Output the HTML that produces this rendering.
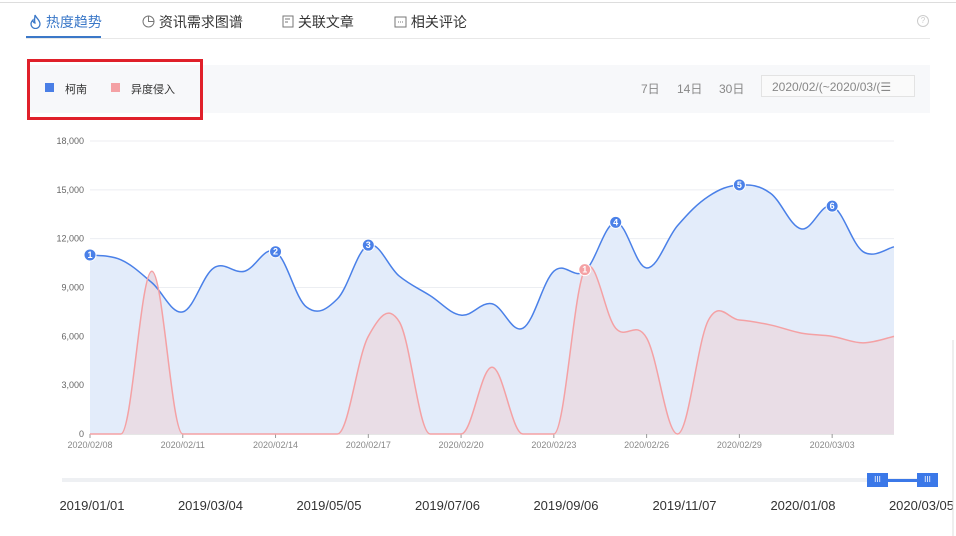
<!DOCTYPE html><html><head><meta charset="utf-8"><style>
body{margin:0;width:956px;height:536px;background:#fff;font-family:"Liberation Sans","Noto Sans CJK SC",sans-serif;position:relative;overflow:hidden}
.a{position:absolute}
.tab{position:absolute;top:12px;font-size:14px;color:#333}
</style></head><body>
<div class="a" style="left:0;top:2px;width:956px;height:1px;background:#ddd"></div>
<div class="a" style="left:26px;top:38px;width:904px;height:1px;background:#e8e8e8"></div>
<div class="a" style="left:26px;top:36px;width:75px;height:2px;background:#3b78c8"></div>
<div class="tab" style="left:29px;color:#3b78c8"><svg width="13" height="15" viewBox="0 0 13 15" style="vertical-align:-2px"><path d="M6 1C7 4 11 6 11 10A4.5 4.5 0 0 1 2 10C2 8 3 7 4 6C4 8 5 9 6 9C5 6 6 3 6 1Z" fill="none" stroke="#3b78c8" stroke-width="1.3"/></svg> 热度趋势</div>
<div class="tab" style="left:142px"><svg width="13" height="13" viewBox="0 0 13 13" style="vertical-align:-1px"><circle cx="6.5" cy="6.5" r="5.5" fill="none" stroke="#777"/><path d="M6.5 1V6.5H12" fill="none" stroke="#777"/></svg> 资讯需求图谱</div>
<div class="tab" style="left:282px"><svg width="12" height="13" style="vertical-align:-1px"><rect x="1" y="1" width="10" height="11" fill="none" stroke="#777"/><path d="M3 4h5M3 7h3" stroke="#777"/></svg> 关联文章</div>
<div class="tab" style="left:394px"><svg width="13" height="12" style="vertical-align:-1px"><rect x="1" y="1" width="11" height="10" fill="none" stroke="#777"/><path d="M4 6h1M6 6h1M8 6h1" stroke="#777"/></svg> 相关评论</div>
<div class="a" style="left:917px;top:15px;width:10px;height:10px;border:1px solid #ccc;border-radius:50%;font-size:8px;color:#ccc;text-align:center;line-height:10px">?</div>
<div class="a" style="left:27px;top:65px;width:903px;height:48px;background:#f7f8fa"></div>
<div class="a" style="left:27px;top:59px;width:170px;height:55px;border:3px solid #e0202a"></div>
<div class="a" style="left:45px;top:83px;width:9px;height:9px;background:#4a7fe6"></div>
<div class="a" style="left:65px;top:81px;font-size:11px;color:#333">柯南</div>
<div class="a" style="left:111px;top:83px;width:9px;height:9px;background:#f4a1a4"></div>
<div class="a" style="left:131px;top:81px;font-size:11px;color:#333">异度侵入</div>
<div class="a" style="left:641px;top:80px;font-size:12px;color:#888">7日</div>
<div class="a" style="left:677px;top:80px;font-size:12px;color:#888">14日</div>
<div class="a" style="left:719px;top:80px;font-size:12px;color:#888">30日</div>
<div class="a" style="left:761px;top:75px;height:22px;border:1px solid #e3e3e3;background:#fafafa;font-size:12px;color:#888;line-height:22px;padding-left:10px;box-sizing:border-box;width:154px">2020/02/(~2020/03/(☰</div>
<svg class="a" style="left:0;top:0" width="956" height="536" id="s"></svg>
<div class="a" style="left:62px;top:478px;width:870px;height:4px;background:#eef0f3"></div>
<div class="a" style="left:888px;top:479px;width:30px;height:3px;background:#3b78e8"></div>
<div class="a" style="left:867px;top:473px;width:21px;height:14px;background:#3b78e8;color:#fff;font-size:8px;text-align:center;line-height:14px">III</div>
<div class="a" style="left:917px;top:473px;width:21px;height:14px;background:#3b78e8;color:#fff;font-size:8px;text-align:center;line-height:14px">III</div>
<script>
var s=document.getElementById('s'),h='';
var Y=function(v){return 434-v*293/18000},X=function(i){return 90+i*804/26};
[0,3000,6000,9000,12000,15000,18000].forEach(function(v){var y=Y(v);h+='<line x1="90" x2="894" y1="'+y+'" y2="'+y+'" stroke="'+(v?'#eceef2':'#ccc')+'"/>';h+='<text x="84" y="'+(y+3)+'" font-size="9" fill="#666" text-anchor="end">'+(v?v.toLocaleString('en-US'):'0')+'</text>';});
var d=['2020/02/08','2020/02/11','2020/02/14','2020/02/17','2020/02/20','2020/02/23','2020/02/26','2020/02/29','2020/03/03'];
d.forEach(function(t,i){var x=X(i*3);h+='<line x1="'+x+'" x2="'+x+'" y1="434" y2="438" stroke="#999"/><text x="'+x+'" y="448" font-size="9" fill="#888" text-anchor="middle">'+t+'</text>';});
var b=[11000,10700,9300,7500,10200,10000,11200,7800,8300,11600,9700,8500,7300,8000,6500,10000,10000,13000,10200,12800,14600,15300,14800,12600,14000,11200,11500];
var p=[0,0,10000,0,0,0,0,0,0,6000,6900,0,0,4100,0,0,10100,6500,5900,0,7000,7000,6700,6200,6000,5600,6000];
function path(a){var pts=a.map(function(v,i){return[X(i),Y(v)]});var q='M'+pts[0];for(var i=0;i<pts.length-1;i++){var p0=pts[i-1]||pts[i],p1=pts[i],p2=pts[i+1],p3=pts[i+2]||p2,t=0.18;
var c1y=p1[1]+(p2[1]-p0[1])*t,c2y=p2[1]-(p3[1]-p1[1])*t;
if(p1[1]>=434)c1y=434;if(p2[1]>=434)c2y=434;
c1y=Math.min(c1y,434);c2y=Math.min(c2y,434);
q+='C'+(p1[0]+(p2[0]-p0[0])*t)+','+c1y+' '+(p2[0]-(p3[0]-p1[0])*t)+','+c2y+' '+p2;}return q}
var pb=path(b),pp=path(p);
h+='<path d="'+pb+'L894,434L90,434Z" fill="#e3ecfa" />';
h+='<path d="'+pp+'L894,434L90,434Z" fill="#e9dde6" />';
h+='<path d="'+pb+'" fill="none" stroke="#4a80e8" stroke-width="1.5"/>';
h+='<path d="'+pp+'" fill="none" stroke="#f4a1a4" stroke-width="1.5"/>';
[[0,1],[6,2],[9,3],[17,4],[21,5],[24,6]].forEach(function(m){h+='<circle cx="'+X(m[0])+'" cy="'+Y(b[m[0]])+'" r="6" fill="#4a80e8" stroke="#fff"/><text x="'+X(m[0])+'" y="'+(Y(b[m[0]])+3)+'" font-size="9" font-weight="bold" fill="#fff" text-anchor="middle">'+m[1]+'</text>';});
h+='<circle cx="'+X(16)+'" cy="'+Y(p[16])+'" r="6" fill="#f4a1a4" stroke="#fff"/><text x="'+X(16)+'" y="'+(Y(p[16])+3)+'" font-size="9" font-weight="bold" fill="#fff" text-anchor="middle">1</text>';
['2019/01/01','2019/03/04','2019/05/05','2019/07/06','2019/09/06','2019/11/07','2020/01/08','2020/03/05'].forEach(function(t,i){h+='<text x="'+(92+i*118.5)+'" y="510" font-size="13" fill="#333" text-anchor="middle">'+t+'</text>';});
h+='<line x1="953" x2="953" y1="340" y2="536" stroke="#ddd"/>';
s.innerHTML=h;
</script>
</body></html>
